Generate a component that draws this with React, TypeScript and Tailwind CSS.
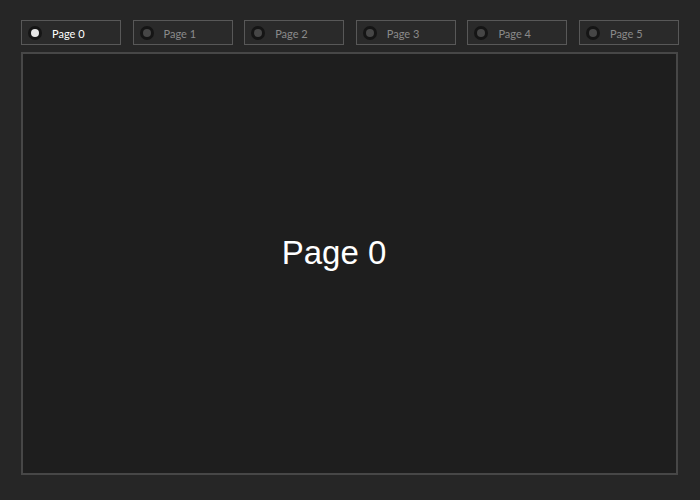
import { useState } from "react";

const pages = [0, 1, 2, 3, 4, 5];

export default function App() {
  const [active, setActive] = useState(0);

  return (
    <div
      className="h-[500px] w-[700px] bg-[#262626] pl-[21px] pt-[20px]"
      style={{ fontFamily: "Lato, 'Open Sans', sans-serif" }}
    >
      <div className="flex w-[658px] justify-between">
        {pages.map((p) => {
          const on = p === active;
          return (
            <button
              key={p}
              onClick={() => setActive(p)}
              className="flex h-[25px] w-[100px] items-center border border-[#585858] bg-[#2a2a2a] pl-[6px] pt-[1px]"
            >
              <span className="flex h-[14px] w-[14px] items-center justify-center rounded-full bg-[#151515]">
                <span
                  className={
                    on
                      ? "h-[8px] w-[8px] rounded-full bg-[#e6e6e6]"
                      : "h-[8px] w-[8px] rounded-full bg-[#464646]"
                  }
                />
              </span>
              <span
                className={
                  on
                    ? "ml-[10px] mt-[2px] text-[11px] text-white"
                    : "ml-[10px] mt-[2px] text-[11px] text-[#8a8a8a]"
                }
              >
                Page {p}
              </span>
            </button>
          );
        })}
      </div>

      <div className="mt-[7px] flex h-[423px] w-[657px] items-center justify-center border-2 border-[#474747] bg-[#1e1e1e] pb-[22px] pr-[31px]">
        <span
          className="text-[33px] text-white"
          style={{ fontFamily: "'Liberation Sans', Arial, sans-serif" }}
        >
          Page {active}
        </span>
      </div>
    </div>
  );
}
